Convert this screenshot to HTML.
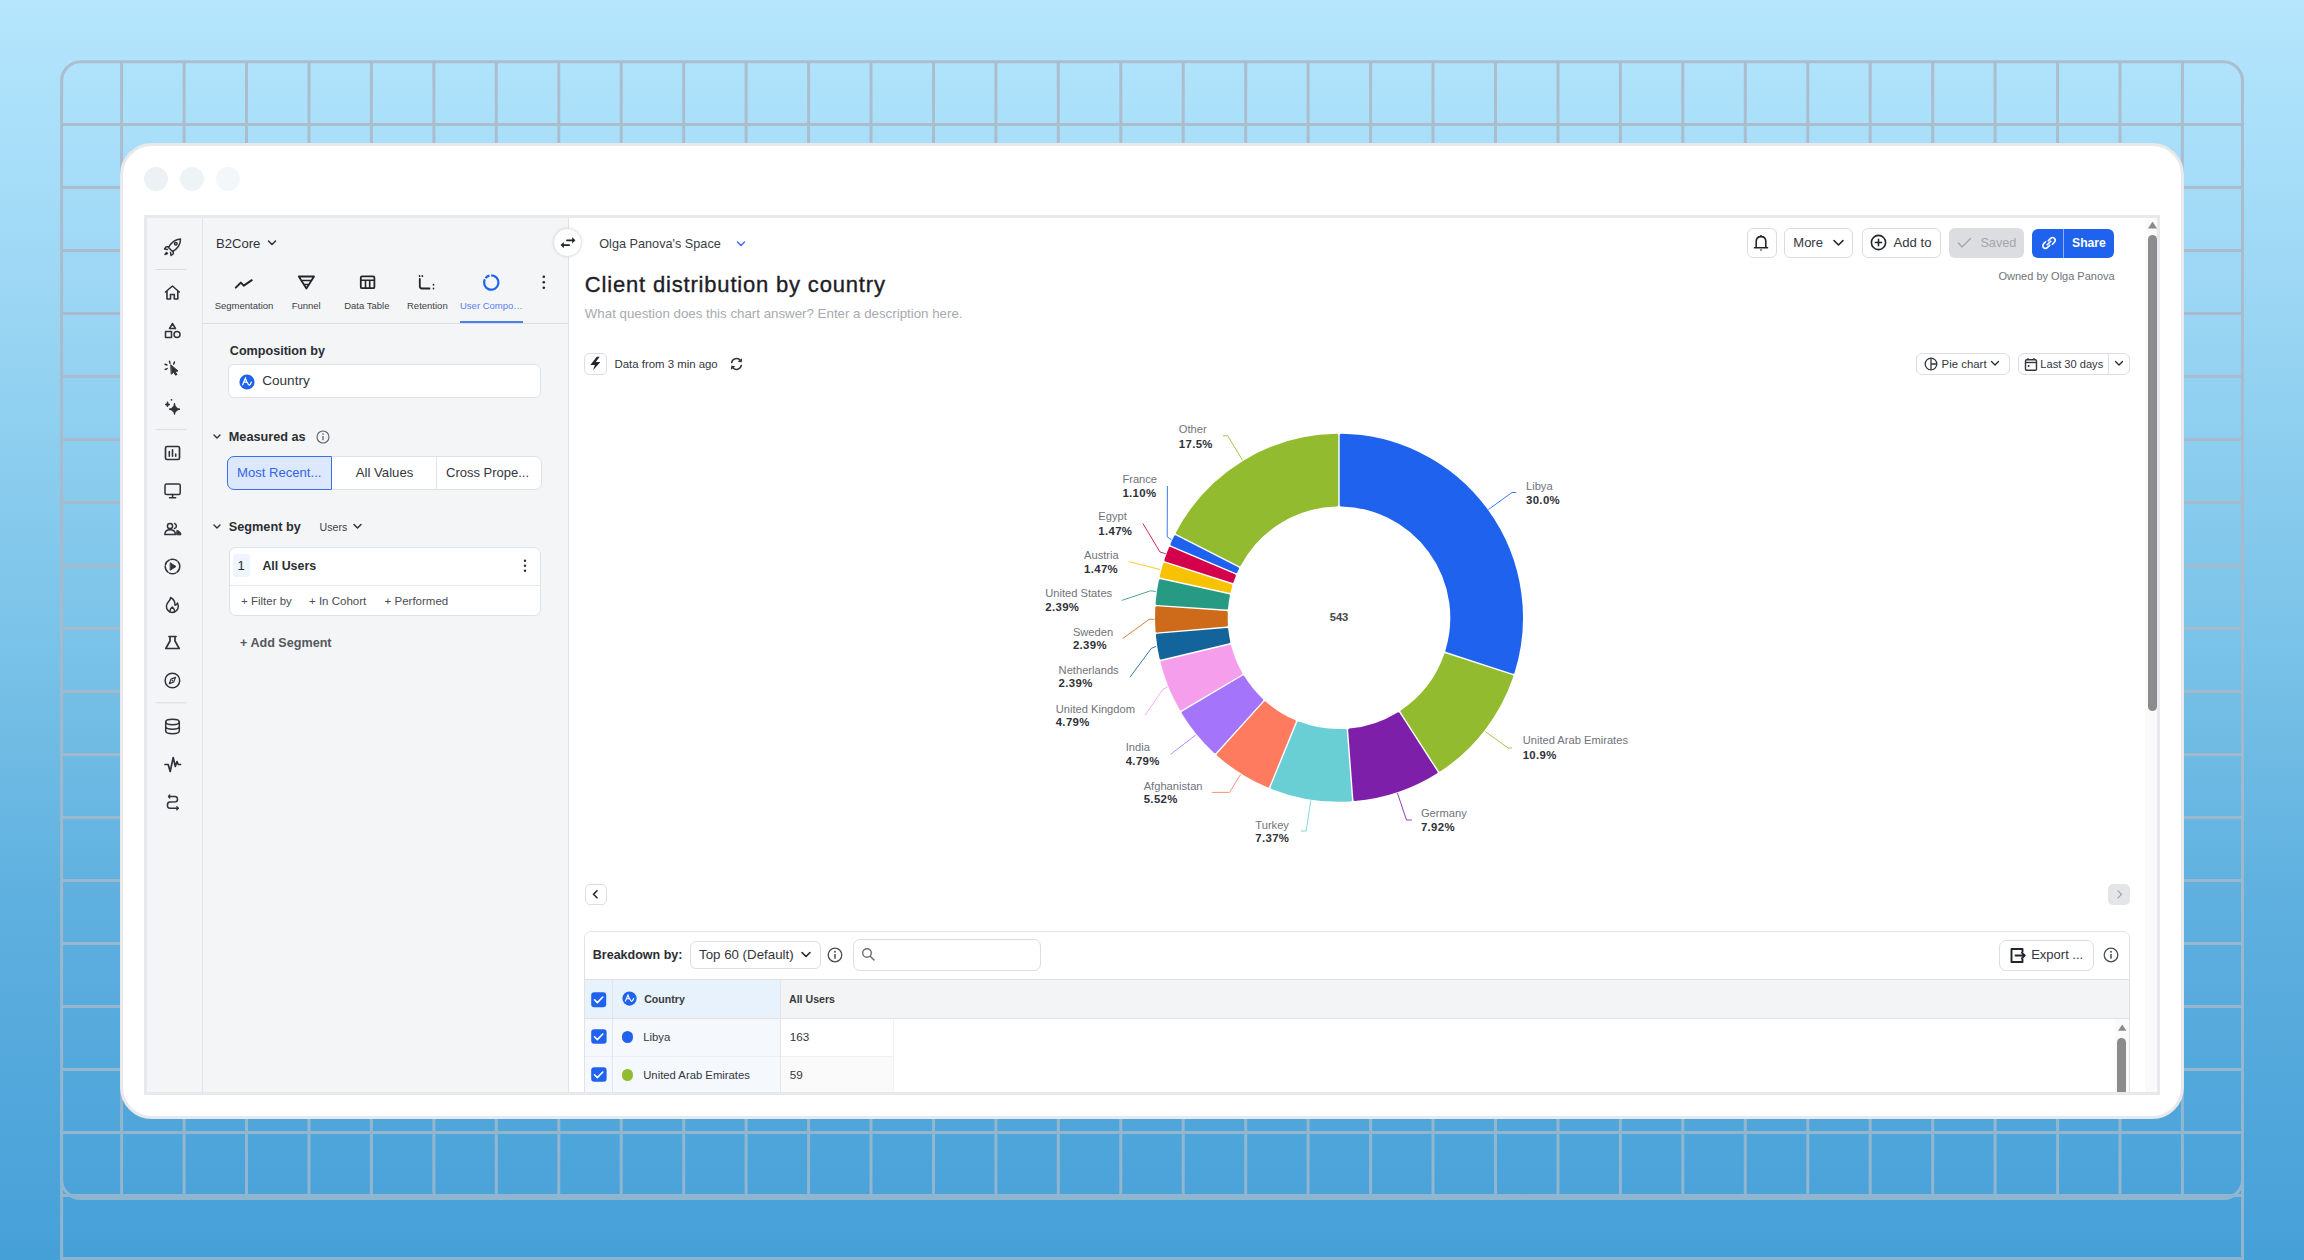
<!DOCTYPE html>
<html><head><meta charset="utf-8">
<style>
*{box-sizing:border-box;margin:0;padding:0}
html,body{width:2304px;height:1260px;overflow:hidden}
body{font-family:"Liberation Sans",sans-serif;color:#2d3036;
 background:linear-gradient(180deg,#b5e6fd 0%,#9bd6f4 23.8%,#7cc4e9 49.2%,#5fb0df 71.4%,#46a0d8 100%);position:relative}
.a{position:absolute}
.t{position:absolute;white-space:nowrap;line-height:20px;height:20px}
.ic{position:absolute;overflow:visible}
.btn{position:absolute;background:#fff;border:1px solid #d9dbdf;border-radius:6px}
</style></head><body>
<svg class="a" style="left:0;top:0" width="2304" height="1260" viewBox="0 0 2304 1260">
<defs><linearGradient id="gl" gradientUnits="userSpaceOnUse" x1="0" y1="0" x2="0" y2="1260"><stop offset="0" stop-color="#adbdcd"/><stop offset="0.49" stop-color="#a6bacb"/><stop offset="1" stop-color="#8eb5cf"/></linearGradient></defs>
<g stroke="url(#gl)" stroke-width="3" fill="none">
<rect x="61.6" y="61.8" width="2180.9" height="1136.6" rx="19" ry="19"/>
<line x1="121.6" y1="61.8" x2="121.6" y2="1198.4"/>
<line x1="184.1" y1="61.8" x2="184.1" y2="1198.4"/>
<line x1="246.5" y1="61.8" x2="246.5" y2="1198.4"/>
<line x1="309.0" y1="61.8" x2="309.0" y2="1198.4"/>
<line x1="371.4" y1="61.8" x2="371.4" y2="1198.4"/>
<line x1="433.9" y1="61.8" x2="433.9" y2="1198.4"/>
<line x1="496.3" y1="61.8" x2="496.3" y2="1198.4"/>
<line x1="558.8" y1="61.8" x2="558.8" y2="1198.4"/>
<line x1="621.2" y1="61.8" x2="621.2" y2="1198.4"/>
<line x1="683.7" y1="61.8" x2="683.7" y2="1198.4"/>
<line x1="746.1" y1="61.8" x2="746.1" y2="1198.4"/>
<line x1="808.6" y1="61.8" x2="808.6" y2="1198.4"/>
<line x1="871.0" y1="61.8" x2="871.0" y2="1198.4"/>
<line x1="933.5" y1="61.8" x2="933.5" y2="1198.4"/>
<line x1="995.9" y1="61.8" x2="995.9" y2="1198.4"/>
<line x1="1058.3" y1="61.8" x2="1058.3" y2="1198.4"/>
<line x1="1120.8" y1="61.8" x2="1120.8" y2="1198.4"/>
<line x1="1183.2" y1="61.8" x2="1183.2" y2="1198.4"/>
<line x1="1245.7" y1="61.8" x2="1245.7" y2="1198.4"/>
<line x1="1308.1" y1="61.8" x2="1308.1" y2="1198.4"/>
<line x1="1370.6" y1="61.8" x2="1370.6" y2="1198.4"/>
<line x1="1433.0" y1="61.8" x2="1433.0" y2="1198.4"/>
<line x1="1495.5" y1="61.8" x2="1495.5" y2="1198.4"/>
<line x1="1558.0" y1="61.8" x2="1558.0" y2="1198.4"/>
<line x1="1620.4" y1="61.8" x2="1620.4" y2="1198.4"/>
<line x1="1682.8" y1="61.8" x2="1682.8" y2="1198.4"/>
<line x1="1745.3" y1="61.8" x2="1745.3" y2="1198.4"/>
<line x1="1807.8" y1="61.8" x2="1807.8" y2="1198.4"/>
<line x1="1870.2" y1="61.8" x2="1870.2" y2="1198.4"/>
<line x1="1932.7" y1="61.8" x2="1932.7" y2="1198.4"/>
<line x1="1995.1" y1="61.8" x2="1995.1" y2="1198.4"/>
<line x1="2057.6" y1="61.8" x2="2057.6" y2="1198.4"/>
<line x1="2120.0" y1="61.8" x2="2120.0" y2="1198.4"/>
<line x1="2182.4" y1="61.8" x2="2182.4" y2="1198.4"/>
<line x1="61.6" y1="124.4" x2="2242.5" y2="124.4"/>
<line x1="61.6" y1="187.4" x2="2242.5" y2="187.4"/>
<line x1="61.6" y1="250.4" x2="2242.5" y2="250.4"/>
<line x1="61.6" y1="313.4" x2="2242.5" y2="313.4"/>
<line x1="61.6" y1="376.4" x2="2242.5" y2="376.4"/>
<line x1="61.6" y1="439.4" x2="2242.5" y2="439.4"/>
<line x1="61.6" y1="502.4" x2="2242.5" y2="502.4"/>
<line x1="61.6" y1="565.4" x2="2242.5" y2="565.4"/>
<line x1="61.6" y1="628.4" x2="2242.5" y2="628.4"/>
<line x1="61.6" y1="691.4" x2="2242.5" y2="691.4"/>
<line x1="61.6" y1="754.4" x2="2242.5" y2="754.4"/>
<line x1="61.6" y1="817.4" x2="2242.5" y2="817.4"/>
<line x1="61.6" y1="880.4" x2="2242.5" y2="880.4"/>
<line x1="61.6" y1="943.4" x2="2242.5" y2="943.4"/>
<line x1="61.6" y1="1006.4" x2="2242.5" y2="1006.4"/>
<line x1="61.6" y1="1069.4" x2="2242.5" y2="1069.4"/>
<line x1="61.6" y1="1132.4" x2="2242.5" y2="1132.4"/>
<line x1="61.6" y1="1100" x2="61.6" y2="1260"/>
<line x1="2242.5" y1="1100" x2="2242.5" y2="1260"/>
<line x1="61.6" y1="1195.5" x2="2242.5" y2="1195.5"/>
<line x1="61.6" y1="1258.5" x2="2242.5" y2="1258.5"/>
</g></svg>
<!-- browser window -->
<div class="a" style="left:120px;top:143px;width:2064px;height:976px;background:#fff;border:3px solid #e8e9ec;border-radius:32px"></div>
<div class="a" style="left:144px;top:167px;width:24px;height:24px;border-radius:50%;background:#ebf1f4"></div>
<div class="a" style="left:180px;top:167px;width:24px;height:24px;border-radius:50%;background:#eef4f6"></div>
<div class="a" style="left:216px;top:167px;width:24px;height:24px;border-radius:50%;background:#f4f7f9"></div>
<!-- inner frame -->
<div class="a" style="left:144px;top:215px;width:2016px;height:880px;border:3px solid #e8e9ec;background:#fff;overflow:hidden">
 <div class="a" style="left:0;top:0;width:421px;height:874px;background:#f4f5f7"></div>
 <div class="a" style="left:55px;top:0;width:1px;height:874px;background:#e3e4e8"></div>
 <div class="a" style="left:421px;top:0;width:1px;height:874px;background:#e0e1e5"></div>
</div>
<div class="a" style="left:0;top:0;width:2160px;height:1092px;overflow:hidden">
<svg class="a" style="left:147px;top:218px" width="55" height="600" viewBox="147 218 55 600">
<g fill="none" stroke="#30333a" stroke-width="1.5" stroke-linecap="round" stroke-linejoin="round">
 <!-- rocket -->
 <path d="M180.5,239 C175,239.5 171,243 168.5,247.5 L172.5,251.5 C177,249 180.5,245 180.5,239 Z"/>
 <circle cx="175.8" cy="243.8" r="1.3"/>
 <path d="M168.8,246.8 L166,246.8 L164.5,249 L167.5,249.5"/>
 <path d="M173.2,251.2 L173.2,254 L171,255.5 L170.5,252.5"/>
 <path d="M166.5,252.5 L165,254.5 L167.5,253.5 Z" fill="#30333a"/>
 <line x1="156" y1="269.5" x2="186" y2="269.5" stroke="#dcdde1" stroke-width="1"/>
 <!-- home -->
 <path d="M165.5,292 L172.4,286 L179.3,292 M167,290.8 L167,299 L170.5,299 L170.5,294.5 L174.3,294.5 L174.3,299 L177.8,299 L177.8,290.8" stroke-width="1.6"/>
 <!-- shapes -->
 <path d="M172.5,323.5 L175.5,328.5 L169.5,328.5 Z"/>
 <rect x="165.5" y="331.5" width="6" height="6"/>
 <circle cx="177" cy="334.5" r="3"/>
 <!-- click -->
 <path d="M171,365 L178,371 L175,371.5 L177,374.5 L175.5,375.2 L173.8,372.2 L171.5,374 Z" fill="#30333a" stroke-width="1"/>
 <path d="M169.5,361.2 L169.9,363.2 M165,364.2 L167,365 M165.2,369.5 L167.1,368.6 M174.5,362 L173.7,364"/>
 <!-- sparkle -->
 <path d="M174.5,403.5 Q175.2,408.5 180,409.2 Q175.2,410 174.5,414.5 Q173.8,410 169,409.2 Q173.8,408.5 174.5,403.5 Z" fill="#30333a" stroke-width="1"/>
 <path d="M167.5,402 Q167.8,404.2 170,404.5 Q167.8,404.8 167.5,407 Q167.2,404.8 165,404.5 Q167.2,404.2 167.5,402 Z" fill="#30333a" stroke-width="0.8"/>
 <circle cx="171.5" cy="399.8" r="0.9" fill="#30333a" stroke="none"/>
 <line x1="156" y1="429.6" x2="186" y2="429.6" stroke="#dcdde1" stroke-width="1"/>
 <!-- bar chart -->
 <rect x="165.5" y="446.5" width="14" height="13" rx="1.5" stroke-width="1.7"/>
 <path d="M169.3,451.5 L169.3,456.2 M172.5,449.8 L172.5,456.2 M175.7,454 L175.7,456.2" stroke-width="1.6"/>
 <!-- monitor -->
 <rect x="165" y="484" width="15.2" height="10.5" rx="1.5"/>
 <path d="M172.6,494.5 L172.6,497.5 M169.5,497.8 L175.7,497.8"/>
 <!-- users -->
 <circle cx="170" cy="526" r="2.6"/>
 <path d="M164.8,534.5 C165,531 167.5,529.8 170,529.8 C173,529.8 175.2,531 175.5,534.5 Z"/>
 <path d="M174.5,523.5 A2.6,2.6 0 0 1 174.5,528.5"/>
 <path d="M177.2,530.5 C179.5,531 180.8,532.5 181,534.8 L177,534.8 Z" fill="#30333a" stroke-width="1"/>
 <!-- play dashed -->
 <circle cx="172.5" cy="566.5" r="7.3" stroke-dasharray="6.5 1.6"/>
 <path d="M170.5,563 L176,566.5 L170.5,570 Z" fill="#30333a" stroke-width="1"/>
 <!-- fire -->
 <path d="M170.5,597.5 C170.8,600 168.5,601.5 167.2,603.5 C165.5,606.5 166.2,611.5 172.3,612.5 C178.3,611.5 179.3,606.5 177.5,603 C176.8,604.5 175.8,605 175,605.2 C175.2,601.5 173.5,599 170.5,597.5 Z"/>
 <path d="M170,612 C169.5,610 171,608.2 172.3,607 C173.6,608.2 175,610 174.5,612"/>
 <!-- flask -->
 <path d="M169,636.5 L176,636.5 M170,636.5 L170,641 L165.8,648.5 L179.2,648.5 L175,641 L175,636.5" stroke-width="1.7"/>
 <!-- compass -->
 <circle cx="172.4" cy="680.5" r="7.3"/>
 <path d="M175.5,677.4 L173.8,681.9 L169.3,683.6 L171,679.1 Z" fill="none" stroke-width="1.2"/>
 <circle cx="172.4" cy="680.5" r="0.8" fill="#30333a" stroke="none"/>
 <line x1="156" y1="702.8" x2="186" y2="702.8" stroke="#dcdde1" stroke-width="1"/>
 <!-- database -->
 <ellipse cx="172.5" cy="722" rx="6.8" ry="2.7"/>
 <path d="M165.7,722 L165.7,731 C165.7,734.6 179.3,734.6 179.3,731 L179.3,722 M165.7,726.5 C165.7,730 179.3,730 179.3,726.5"/>
 <!-- pulse -->
 <path d="M165,764.5 L168.2,764.5 L170.2,771.5 L173.2,757.5 L175.3,766.5 L177,761.5 L178.2,764.5 L180.5,764.5" stroke-width="1.7"/>
 <!-- route -->
 <path d="M169,796.5 L175,796.5 C178,796.5 178.5,801.5 175.5,801.8 L169.8,802 C166.5,802.2 166.8,808.3 169.8,808.3 L178,808.3"/>
 <path d="M169.8,795 L168.5,796.5 L169.8,798 M176.8,806.8 L178.3,808.3 L176.8,809.8" stroke-width="1.3"/>
 <line x1="0" y1="0" x2="0" y2="0"/>
</g>
</svg>

<div class="t" style="left:216px;top:233.5px;font-size:13.1px;color:#2f3237">B2Core</div>
<svg class="ic" style="left:266px;top:238px" width="12" height="10"><path d="M2.5,3 L6,6.5 L9.5,3" fill="none" stroke="#2f3237" stroke-width="1.5" stroke-linecap="round" stroke-linejoin="round"/></svg>
<!-- tabs icons -->
<svg class="a" style="left:203px;top:265px" width="366" height="30" viewBox="203 265 366 30">
<g fill="none" stroke="#22252a" stroke-width="2" stroke-linecap="round" stroke-linejoin="round">
 <path d="M235.8,287.6 L240.8,282.6 L243.8,285.6 L251.8,280.2"/>
 <path d="M298.8,276.5 L314,276.5 L306.4,288.5 Z" stroke-width="1.8"/>
 <path d="M302.2,280.6 L310.6,280.6 M304.6,284.5 L308.2,284.5" stroke-width="1.5"/>
 <rect x="360.8" y="276.4" width="13.6" height="11.8" rx="1.3" stroke-width="1.8"/>
 <path d="M361,280.2 L374.2,280.2 M365.5,280.2 L365.5,288 M369.7,280.2 L369.7,288" stroke-width="1.6"/>
 <path d="M419.8,279 L419.8,286.3 C419.8,287.8 420.5,288.5 422,288.5 L429.5,288.5" stroke-width="1.8"/>
 <path d="M419.5,275.8 L419.6,276.3 M422.3,275.8 L422.4,276.3 M433.5,284.6 L433.5,285 M433.5,288.3 L433.5,288.7" stroke-width="1.6"/>
 <path d="M491.2,275.3 A7.2,7.2 0 1 1 484.8,279.3" stroke="#1f62ee" stroke-width="2.2" stroke-linecap="butt"/>
 <path d="M489.5,275.6 A7.2,7.2 0 0 0 485.5,278.2" stroke="#1f62ee" stroke-width="2.2" stroke-linecap="butt"/>
 <circle cx="543.8" cy="276.8" r="1.3" fill="#22252a" stroke="none"/>
 <circle cx="543.8" cy="282.3" r="1.3" fill="#22252a" stroke="none"/>
 <circle cx="543.8" cy="287.8" r="1.3" fill="#22252a" stroke="none"/>
</g></svg>
<div class="t" style="left:214.7px;top:295.5px;font-size:9.5px;color:#3c3f45">Segmentation</div>
<div class="t" style="left:291.7px;top:295.5px;font-size:9.5px;color:#3c3f45">Funnel</div>
<div class="t" style="left:344.2px;top:295.5px;font-size:9.5px;color:#3c3f45">Data Table</div>
<div class="t" style="left:407px;top:295.5px;font-size:9.5px;color:#3c3f45">Retention</div>
<div class="t" style="left:460px;top:295.5px;font-size:9.5px;color:#5b7ef0">User Compo…</div>
<div class="a" style="left:460px;top:321px;width:63px;height:2px;background:#4f7df0"></div>
<div class="a" style="left:203px;top:323px;width:365px;height:1px;background:#dcdee2"></div>
<!-- composition -->
<div class="t" style="left:229.8px;top:340.8px;font-size:12.6px;font-weight:700;color:#2b2e33">Composition by</div>
<div class="a" style="left:228.4px;top:363.7px;width:312.6px;height:34.5px;background:#fff;border:1px solid #dfe1e5;border-radius:6px"></div>
<svg class="ic" style="left:239px;top:373.5px" width="16" height="16" viewBox="0 0 16 16"><circle cx="8" cy="8" r="7.6" fill="#1f62ee"/><path d="M3.6,10.8 L6.4,4.2 L8,8.5 M5,8.2 L7.5,8.2 M8.3,8.3 C9.5,12 11,12 12.4,8" fill="none" stroke="#fff" stroke-width="1.2" stroke-linecap="round"/></svg>
<div class="t" style="left:262.2px;top:371.3px;font-size:13.6px;color:#33363c">Country</div>
<!-- measured as -->
<svg class="ic" style="left:212px;top:432px" width="10" height="10"><path d="M2,3 L5,6 L8,3" fill="none" stroke="#2f3237" stroke-width="1.4" stroke-linecap="round" stroke-linejoin="round"/></svg>
<div class="t" style="left:228.8px;top:427px;font-size:12.7px;font-weight:700;color:#2b2e33">Measured as</div>
<svg class="ic" style="left:315.8px;top:430px" width="14" height="14" viewBox="0 0 14 14"><circle cx="7" cy="7" r="6" fill="none" stroke="#5f636a" stroke-width="1.1"/><path d="M7,6 L7,10.2" stroke="#5f636a" stroke-width="1.3"/><circle cx="7" cy="4.1" r="0.8" fill="#5f636a"/></svg>
<div class="a" style="left:227.3px;top:455.5px;width:315.2px;height:34.1px;background:#fff;border:1px solid #dfe1e5;border-radius:7px"></div>
<div class="a" style="left:227.3px;top:455.5px;width:105px;height:34.1px;background:#dce8fd;border:1.5px solid #3b6ff0;border-radius:7px 0 0 7px"></div>
<div class="a" style="left:436.3px;top:456px;width:1px;height:33px;background:#e3e5e8"></div>
<div class="t" style="left:237px;top:462.5px;font-size:13.1px;color:#3565e6">Most Recent...</div>
<div class="t" style="left:355.7px;top:462.5px;font-size:13.2px;color:#33363c">All Values</div>
<div class="t" style="left:446px;top:462.5px;font-size:13px;color:#33363c">Cross Prope...</div>
<!-- segment by -->
<svg class="ic" style="left:212px;top:522.3px" width="10" height="10"><path d="M2,3 L5,6 L8,3" fill="none" stroke="#2f3237" stroke-width="1.4" stroke-linecap="round" stroke-linejoin="round"/></svg>
<div class="t" style="left:228.8px;top:517.3px;font-size:12.7px;font-weight:700;color:#2b2e33">Segment by</div>
<div class="t" style="left:319.6px;top:517.3px;font-size:10.6px;color:#3c3f45">Users</div>
<svg class="ic" style="left:352px;top:522px" width="12" height="10"><path d="M2,2.5 L5.5,6 L9,2.5" fill="none" stroke="#2f3237" stroke-width="1.5" stroke-linecap="round" stroke-linejoin="round"/></svg>
<div class="a" style="left:228.7px;top:546.5px;width:312.3px;height:69.5px;background:#fff;border:1px solid #dfe1e5;border-radius:7px"></div>
<div class="a" style="left:229.5px;top:584.5px;width:311px;height:1px;background:#e6e8eb"></div>
<div class="a" style="left:233px;top:554px;width:17px;height:23px;background:#eef5fd;border-radius:3px"></div>
<div class="t" style="left:237.5px;top:556px;font-size:13px;color:#2b2e33">1</div>
<div class="t" style="left:262.4px;top:556px;font-size:12.4px;font-weight:700;color:#2b2e33">All Users</div>
<svg class="ic" style="left:522px;top:559px" width="6" height="14"><circle cx="3" cy="1.8" r="1.2" fill="#2b2e33"/><circle cx="3" cy="6.8" r="1.2" fill="#2b2e33"/><circle cx="3" cy="11.8" r="1.2" fill="#2b2e33"/></svg>
<div class="t" style="left:241px;top:590.6px;font-size:11.5px;color:#4a4d53">+ Filter by</div>
<div class="t" style="left:309px;top:590.6px;font-size:11.5px;color:#4a4d53">+ In Cohort</div>
<div class="t" style="left:384.6px;top:590.6px;font-size:11.5px;color:#4a4d53">+ Performed</div>
<div class="t" style="left:240px;top:633px;font-size:12.6px;font-weight:700;color:#54575d">+ Add Segment</div>
<!-- swap circle -->
<div class="a" style="left:553px;top:228.2px;width:28.8px;height:28.8px;border-radius:50%;background:#fff;border:1px solid #e2e4e8;box-shadow:0 0 3px rgba(0,0,0,0.10)"></div>
<svg class="ic" style="left:559px;top:235px" width="18" height="14" viewBox="559 235 18 14"><path d="M567,240.3 L572.8,240.3 M569.1,245.1 L563.3,245.1" stroke="#22252a" stroke-width="1.8" stroke-linecap="round"/><path d="M572.2,237.2 L575.4,240.3 L572.2,243.4 Z M563.8,242 L560.6,245.1 L563.8,248.2 Z" fill="#22252a"/></svg>

<div class="t" style="left:599.2px;top:234.4px;font-size:12.7px;color:#3a3d43">Olga Panova's Space</div>
<svg class="ic" style="left:735px;top:239px" width="12" height="10"><path d="M2.5,3 L6,6.5 L9.5,3" fill="none" stroke="#3b6ff0" stroke-width="1.5" stroke-linecap="round" stroke-linejoin="round"/></svg>
<!-- buttons -->
<div class="btn" style="left:1746.6px;top:228.2px;width:30px;height:29.6px;border-color:#dadce0"></div>
<svg class="ic" style="left:1753px;top:234px" width="16" height="18" viewBox="0 0 16 18"><path d="M3.2,13.5 L3.2,7.5 C3.2,4.5 5.2,2.6 8,2.6 C10.8,2.6 12.8,4.5 12.8,7.5 L12.8,13.5 M1.5,13.8 L14.5,13.8" fill="none" stroke="#22252a" stroke-width="1.6" stroke-linecap="round"/><path d="M6.6,15.6 L9.4,15.6 L8,17 Z" fill="#22252a"/><circle cx="8" cy="2" r="1" fill="#22252a"/></svg>
<div class="btn" style="left:1784.2px;top:228.2px;width:69.3px;height:29.6px;border-color:#dadce0"></div>
<div class="t" style="left:1793.3px;top:233px;font-size:13px;color:#33363c">More</div>
<svg class="ic" style="left:1832px;top:238px" width="13" height="10"><path d="M2,2.5 L6.5,7 L11,2.5" fill="none" stroke="#22252a" stroke-width="1.6" stroke-linecap="round" stroke-linejoin="round"/></svg>
<div class="btn" style="left:1862.2px;top:228.2px;width:78.8px;height:29.6px;border-color:#dadce0"></div>
<svg class="ic" style="left:1869.5px;top:234.2px" width="17" height="17" viewBox="0 0 17 17"><circle cx="8.5" cy="8.5" r="7.1" fill="none" stroke="#22252a" stroke-width="1.6"/><path d="M8.5,4.8 L8.5,12.2 M4.8,8.5 L12.2,8.5" stroke="#22252a" stroke-width="1.6"/></svg>
<div class="t" style="left:1893.6px;top:233px;font-size:13.1px;color:#33363c">Add to</div>
<div class="a" style="left:1948.9px;top:227.9px;width:75.1px;height:30.2px;background:#dcdde1;border-radius:6px"></div>
<svg class="ic" style="left:1956.5px;top:237px" width="15" height="12" viewBox="0 0 15 12"><path d="M1.5,6 L5,10 L13.5,1.5" fill="none" stroke="#a3a6ad" stroke-width="1.4" stroke-linecap="round" stroke-linejoin="round"/></svg>
<div class="t" style="left:1980.4px;top:233px;font-size:12.7px;color:#a3a6ad">Saved</div>
<div class="a" style="left:2032.4px;top:229px;width:81.6px;height:28.5px;background:#1f62ee;border-radius:6px"></div>
<div class="a" style="left:2063px;top:229px;width:1.2px;height:28.5px;background:#8fb0f8"></div>
<svg class="ic" style="left:2040.5px;top:235px" width="16" height="16" viewBox="0 0 16 16"><path d="M7.2,5.8 L9.4,3.6 C10.6,2.4 12.4,2.4 13.4,3.4 C14.4,4.4 14.4,6.2 13.2,7.4 L11.4,9.2 M8.8,10.2 L6.6,12.4 C5.4,13.6 3.6,13.6 2.6,12.6 C1.6,11.6 1.6,9.8 2.8,8.6 L4.6,6.8 M6.2,9.8 L9.8,6.2" fill="none" stroke="#fff" stroke-width="1.6" stroke-linecap="round"/></svg>
<div class="t" style="left:2072px;top:233px;font-size:12.2px;font-weight:700;color:#fff">Share</div>
<div class="t" style="left:1998.5px;top:266.3px;font-size:11px;color:#6f737a">Owned by Olga Panova</div>
<!-- title -->
<div class="t" style="left:584.8px;top:272px;font-size:22px;letter-spacing:0.82px;color:#1d2026;-webkit-text-stroke:0.35px #1d2026;height:26px;line-height:26px">Client distribution by country</div>
<div class="t" style="left:584.8px;top:303.8px;font-size:13.3px;color:#a6aab1">What question does this chart answer? Enter a description here.</div>
<!-- data from -->
<div class="btn" style="left:584.4px;top:353.2px;width:22.2px;height:21.6px;border-color:#dcdee2;border-radius:5px"></div>
<svg class="ic" style="left:585px;top:354px" width="21" height="20" viewBox="585 354 21 20"><path d="M596.8,356.8 L590.3,364.9 L594.9,364.9 L593,370.3 L600.4,362.1 L595.8,362.1 L599.6,356.8 Z" fill="#22252a"/></svg>
<div class="t" style="left:614.5px;top:354px;font-size:11.4px;color:#33363c">Data from 3 min ago</div>
<svg class="ic" style="left:728px;top:356px" width="17" height="17" viewBox="728 356 17 17"><path d="M731.6,363.2 A5,5 0 0 1 740.6,360.6 M741.4,364.8 A5,5 0 0 1 732.4,367.4" fill="none" stroke="#33363c" stroke-width="1.5"/><path d="M742.2,358.2 L741.6,362.6 L737.6,361.4 Z M730.8,369.8 L731.4,365.4 L735.4,366.6 Z" fill="#33363c"/></svg>
<!-- pie chart / last 30 -->
<div class="btn" style="left:1916.1px;top:353.1px;width:94.2px;height:21.6px;border-color:#dcdee2;border-radius:6px"></div>
<svg class="ic" style="left:1923.5px;top:357px" width="14" height="14" viewBox="0 0 14 14"><circle cx="7" cy="7" r="5.8" fill="none" stroke="#33363c" stroke-width="1.3"/><path d="M7,1.2 L7,12.8 M7,7 L12.8,7" stroke="#33363c" stroke-width="1.3"/></svg>
<div class="t" style="left:1941.6px;top:354px;font-size:11.4px;color:#33363c">Pie chart</div>
<svg class="ic" style="left:1990px;top:360px" width="10" height="8"><path d="M1.5,1.5 L5,5 L8.5,1.5" fill="none" stroke="#22252a" stroke-width="1.3" stroke-linecap="round" stroke-linejoin="round"/></svg>
<div class="btn" style="left:2018.2px;top:353.1px;width:111.8px;height:21.6px;border-color:#dcdee2;border-radius:6px"></div>
<div class="a" style="left:2107.5px;top:354px;width:1px;height:20px;background:#dcdee2"></div>
<svg class="ic" style="left:2024px;top:356.5px" width="14" height="15" viewBox="0 0 14 15"><rect x="1.5" y="2.8" width="11" height="10.5" rx="1.2" fill="none" stroke="#33363c" stroke-width="1.4"/><path d="M1.5,5.5 L12.5,5.5" stroke="#33363c" stroke-width="1.4"/><path d="M4,1 L4,3 M10,1 L10,3" stroke="#33363c" stroke-width="1.3"/><circle cx="4.6" cy="9" r="1" fill="#33363c"/></svg>
<div class="t" style="left:2040.3px;top:354px;font-size:11.1px;color:#33363c">Last 30 days</div>
<svg class="ic" style="left:2114px;top:360px" width="10" height="8"><path d="M1.5,1.5 L5,5 L8.5,1.5" fill="none" stroke="#22252a" stroke-width="1.3" stroke-linecap="round" stroke-linejoin="round"/></svg>
<!-- scrollbar -->
<div class="a" style="left:2144.8px;top:218px;width:12.2px;height:874px;background:#fafafa"></div>
<svg class="ic" style="left:2147px;top:220px" width="11" height="10"><path d="M1,8.6 L5.5,1.4 L10,8.6 Z" fill="#8b8b8b"/></svg>
<div class="a" style="left:2148px;top:234.9px;width:9px;height:475.8px;background:#8b8b8b;border-radius:4.5px"></div>

<svg class="a" style="left:0;top:0" width="2304" height="1260" viewBox="0 0 2304 1260">
<path d="M1341.10,435.21 A182.6,182.6 0 0 1 1513.24,672.43 L1446.78,650.75 A112.7,112.7 0 0 0 1341.10,505.12 Z" fill="#1f62ee" stroke="#1f62ee" stroke-width="2.8" stroke-linejoin="round"/>
<path d="M1511.93,676.42 A182.6,182.6 0 0 1 1439.72,770.11 L1401.83,711.36 A112.7,112.7 0 0 0 1445.47,654.74 Z" fill="#93bb2f" stroke="#93bb2f" stroke-width="2.8" stroke-linejoin="round"/>
<path d="M1436.19,772.38 A182.6,182.6 0 0 1 1354.81,799.71 L1349.56,730.00 A112.7,112.7 0 0 0 1398.30,713.63 Z" fill="#7e1fa9" stroke="#7e1fa9" stroke-width="2.8" stroke-linejoin="round"/>
<path d="M1350.63,800.03 A182.6,182.6 0 0 1 1271.93,787.63 L1298.35,722.91 A112.7,112.7 0 0 0 1345.37,730.32 Z" fill="#6acfd4" stroke="#6acfd4" stroke-width="2.8" stroke-linejoin="round"/>
<path d="M1268.04,786.05 A182.6,182.6 0 0 1 1218.15,754.68 L1265.02,702.81 A112.7,112.7 0 0 0 1294.46,721.33 Z" fill="#ff7b5f" stroke="#ff7b5f" stroke-width="2.8" stroke-linejoin="round"/>
<path d="M1215.03,751.87 A182.6,182.6 0 0 1 1183.01,712.72 L1243.15,677.07 A112.7,112.7 0 0 0 1261.90,700.00 Z" fill="#a474fb" stroke="#a474fb" stroke-width="2.8" stroke-linejoin="round"/>
<path d="M1180.87,709.11 A182.6,182.6 0 0 1 1161.89,662.24 L1229.89,646.00 A112.7,112.7 0 0 0 1241.00,673.46 Z" fill="#f59fec" stroke="#f59fec" stroke-width="2.8" stroke-linejoin="round"/>
<path d="M1160.91,658.15 A182.6,182.6 0 0 1 1157.23,635.19 L1226.89,629.33 A112.7,112.7 0 0 0 1228.91,641.92 Z" fill="#12649b" stroke="#12649b" stroke-width="2.8" stroke-linejoin="round"/>
<path d="M1156.88,631.01 A182.6,182.6 0 0 1 1156.68,607.76 L1226.43,612.40 A112.7,112.7 0 0 0 1226.54,625.15 Z" fill="#cd6b1b" stroke="#cd6b1b" stroke-width="2.8" stroke-linejoin="round"/>
<path d="M1156.96,603.57 A182.6,182.6 0 0 1 1160.24,580.55 L1228.51,595.59 A112.7,112.7 0 0 0 1226.71,608.21 Z" fill="#269a83" stroke="#269a83" stroke-width="2.8" stroke-linejoin="round"/>
<path d="M1161.14,576.44 A182.6,182.6 0 0 1 1164.45,564.18 L1231.03,585.48 A112.7,112.7 0 0 0 1229.41,591.49 Z" fill="#f9c200" stroke="#f9c200" stroke-width="2.8" stroke-linejoin="round"/>
<path d="M1165.73,560.18 A182.6,182.6 0 0 1 1170.15,548.28 L1234.49,575.63 A112.7,112.7 0 0 0 1232.31,581.48 Z" fill="#d4004b" stroke="#d4004b" stroke-width="2.8" stroke-linejoin="round"/>
<path d="M1171.80,544.41 A182.6,182.6 0 0 1 1175.38,536.73 L1237.66,568.49 A112.7,112.7 0 0 0 1236.13,571.77 Z" fill="#1f62ee" stroke="#1f62ee" stroke-width="2.8" stroke-linejoin="round"/>
<path d="M1177.29,532.99 A182.6,182.6 0 0 1 1336.90,435.21 L1336.90,505.12 A112.7,112.7 0 0 0 1239.57,564.74 Z" fill="#93bb2f" stroke="#93bb2f" stroke-width="2.8" stroke-linejoin="round"/>
<polyline points="1222.9,435.8 1227.7,435.8 1242.5,460.2" fill="none" stroke="#93bb2f" stroke-width="1" stroke-opacity="0.85"/>
<text x="1178.8" y="432.9" font-size="11.15" fill="#6f737b">Other</text>
<text x="1178.8" y="447.7" font-size="11.4" font-weight="700" letter-spacing="0.35" fill="#2f3238">17.5%</text>
<polyline points="1167.4,486.0 1167.2,536.8 1171.5,539.8" fill="none" stroke="#1f62ee" stroke-width="1" stroke-opacity="0.85"/>
<text x="1122.4" y="482.9" font-size="11.15" fill="#6f737b">France</text>
<text x="1122.4" y="496.8" font-size="11.4" font-weight="700" letter-spacing="0.35" fill="#2f3238">1.10%</text>
<polyline points="1142.9,523.5 1160.0,552.0 1165.7,553.7" fill="none" stroke="#d4004b" stroke-width="1" stroke-opacity="0.85"/>
<text x="1098.3" y="519.7" font-size="11.15" fill="#6f737b">Egypt</text>
<text x="1098.3" y="534.9" font-size="11.4" font-weight="700" letter-spacing="0.35" fill="#2f3238">1.47%</text>
<polyline points="1128.9,561.6 1160.0,569.5" fill="none" stroke="#f9c200" stroke-width="1" stroke-opacity="0.85"/>
<text x="1084" y="558.8" font-size="11.15" fill="#6f737b">Austria</text>
<text x="1084" y="572.8" font-size="11.4" font-weight="700" letter-spacing="0.35" fill="#2f3238">1.47%</text>
<polyline points="1121.9,600.4 1150.5,590.8 1155.8,591.5" fill="none" stroke="#269a83" stroke-width="1" stroke-opacity="0.85"/>
<text x="1045.3" y="596.9" font-size="11.15" fill="#6f737b">United States</text>
<text x="1045.3" y="610.5" font-size="11.4" font-weight="700" letter-spacing="0.35" fill="#2f3238">2.39%</text>
<polyline points="1122.6,638.6 1149.3,619.3 1154.3,619.3" fill="none" stroke="#cd6b1b" stroke-width="1" stroke-opacity="0.85"/>
<text x="1072.9" y="635.7" font-size="11.15" fill="#6f737b">Sweden</text>
<text x="1072.9" y="649.3" font-size="11.4" font-weight="700" letter-spacing="0.35" fill="#2f3238">2.39%</text>
<polyline points="1130.0,677.1 1151.4,648.3 1156.0,646.4" fill="none" stroke="#12649b" stroke-width="1" stroke-opacity="0.85"/>
<text x="1058.6" y="673.6" font-size="11.15" fill="#6f737b">Netherlands</text>
<text x="1058.6" y="687.1" font-size="11.4" font-weight="700" letter-spacing="0.35" fill="#2f3238">2.39%</text>
<polyline points="1145.0,715.4 1162.9,689.3 1167.9,686.9" fill="none" stroke="#f59fec" stroke-width="1" stroke-opacity="0.85"/>
<text x="1055.7" y="712.9" font-size="11.15" fill="#6f737b">United Kingdom</text>
<text x="1055.7" y="726.4" font-size="11.4" font-weight="700" letter-spacing="0.35" fill="#2f3238">4.79%</text>
<polyline points="1170.7,754.3 1195.7,735.0" fill="none" stroke="#a474fb" stroke-width="1" stroke-opacity="0.85"/>
<text x="1125.7" y="751.4" font-size="11.15" fill="#6f737b">India</text>
<text x="1125.7" y="765" font-size="11.4" font-weight="700" letter-spacing="0.35" fill="#2f3238">4.79%</text>
<polyline points="1212.0,792.4 1229.5,792.4 1240.6,774.4" fill="none" stroke="#ff7b5f" stroke-width="1" stroke-opacity="0.85"/>
<text x="1143.7" y="789.6" font-size="11.15" fill="#6f737b">Afghanistan</text>
<text x="1143.7" y="803.3" font-size="11.4" font-weight="700" letter-spacing="0.35" fill="#2f3238">5.52%</text>
<polyline points="1300.9,831.0 1306.2,831.0 1310.8,800.3" fill="none" stroke="#6acfd4" stroke-width="1" stroke-opacity="0.85"/>
<text x="1255.3" y="828.8" font-size="11.15" fill="#6f737b">Turkey</text>
<text x="1255.3" y="842" font-size="11.4" font-weight="700" letter-spacing="0.35" fill="#2f3238">7.37%</text>
<polyline points="1411.8,820.0 1406.5,820.0 1397.4,793.0" fill="none" stroke="#7e1fa9" stroke-width="1" stroke-opacity="0.85"/>
<text x="1420.9" y="817" font-size="11.15" fill="#6f737b">Germany</text>
<text x="1420.9" y="830.6" font-size="11.4" font-weight="700" letter-spacing="0.35" fill="#2f3238">7.92%</text>
<polyline points="1512.0,748.0 1508.2,748.0 1485.4,731.6" fill="none" stroke="#93bb2f" stroke-width="1" stroke-opacity="0.85"/>
<text x="1522.7" y="744.3" font-size="11.15" fill="#6f737b">United Arab Emirates</text>
<text x="1522.7" y="759" font-size="11.4" font-weight="700" letter-spacing="0.35" fill="#2f3238">10.9%</text>
<polyline points="1516.3,492.5 1512.0,492.5 1488.4,509.5" fill="none" stroke="#1f62ee" stroke-width="1" stroke-opacity="0.85"/>
<text x="1526" y="490" font-size="11.15" fill="#6f737b">Libya</text>
<text x="1526" y="504.4" font-size="11.4" font-weight="700" letter-spacing="0.35" fill="#2f3238">30.0%</text>
<text x="1339" y="621.3" font-size="11.2" font-weight="700" fill="#45474c" text-anchor="middle">543</text>
</svg>
<!-- carousel arrows -->
<div class="btn" style="left:584.5px;top:884.1px;width:22px;height:20.6px;border-color:#dcdee2;border-radius:5px"></div>
<svg class="ic" style="left:591px;top:889px" width="9" height="11"><path d="M6,1.8 L2.5,5.3 L6,8.8" fill="none" stroke="#22252a" stroke-width="1.6" stroke-linecap="round" stroke-linejoin="round"/></svg>
<div class="a" style="left:2107.5px;top:883.7px;width:22.7px;height:21.3px;background:#e3e5e8;border-radius:5px"></div>
<svg class="ic" style="left:2114.5px;top:889px" width="9" height="11"><path d="M3,1.8 L6.5,5.3 L3,8.8" fill="none" stroke="#9a9da3" stroke-width="1.1" stroke-linecap="round" stroke-linejoin="round"/></svg>
<!-- table card -->
<div class="a" style="left:584.2px;top:931px;width:1545.6px;height:200px;border:1px solid #e0e2e5;border-radius:7px;background:#fff;overflow:hidden">
 <div class="a" style="left:0;top:47.4px;width:1544px;height:39.6px;background:#f3f4f6;border-top:1px solid #dfe1e4;border-bottom:1px solid #dfe1e4"></div>
 <div class="a" style="left:0;top:48.4px;width:194.8px;height:37.6px;background:#e8f2fd"></div>
 <div class="a" style="left:0;top:87px;width:194.8px;height:76px;background:#f5f9fe"></div>
 <div class="a" style="left:194.8px;top:87px;width:113.2px;height:37.3px;background:#fff"></div>
 <div class="a" style="left:194.8px;top:124.3px;width:113.2px;height:38px;background:#fafafa"></div>
 <div class="a" style="left:0;top:124.3px;width:308px;height:1px;background:#eef0f2"></div>
 <div class="a" style="left:308px;top:87px;width:1px;height:76px;background:#f0f1f3"></div>
 <div class="a" style="left:27.2px;top:48.4px;width:1px;height:114px;background:#e3e5e8"></div>
 <div class="a" style="left:194.8px;top:48.4px;width:1px;height:114px;background:#e3e5e8"></div>
 <div class="a" style="left:1529.5px;top:86.8px;width:16px;height:76px;background:#fafafa"></div>
</div>
<div class="t" style="left:592.8px;top:945px;font-size:12.5px;font-weight:700;color:#2b2e33">Breakdown by:</div>
<div class="btn" style="left:690.4px;top:940.5px;width:130.7px;height:28.9px;border-color:#dcdee2;border-radius:6px"></div>
<div class="t" style="left:699px;top:945.2px;font-size:13.3px;color:#33363c">Top 60 (Default)</div>
<svg class="ic" style="left:800px;top:950px" width="12" height="10"><path d="M2,2.5 L6,6.5 L10,2.5" fill="none" stroke="#22252a" stroke-width="1.6" stroke-linecap="round" stroke-linejoin="round"/></svg>
<svg class="ic" style="left:827.2px;top:947px" width="16" height="16" viewBox="0 0 16 16"><circle cx="8" cy="8" r="6.8" fill="none" stroke="#4a4d53" stroke-width="1.3"/><path d="M8,7 L8,11.8" stroke="#4a4d53" stroke-width="1.5"/><circle cx="8" cy="4.7" r="0.95" fill="#4a4d53"/></svg>
<div class="btn" style="left:852.5px;top:939.4px;width:188.4px;height:31.9px;border-color:#dcdee2;border-radius:7px"></div>
<svg class="ic" style="left:861px;top:947px" width="15" height="15" viewBox="0 0 15 15"><circle cx="6" cy="6" r="4.3" fill="none" stroke="#6a6d73" stroke-width="1.4"/><path d="M9.2,9.2 L13,13" stroke="#6a6d73" stroke-width="1.5" stroke-linecap="round"/></svg>
<div class="btn" style="left:1999.2px;top:940px;width:95.3px;height:31px;border-color:#dcdee2;border-radius:7px"></div>
<svg class="ic" style="left:2009px;top:946.5px" width="18" height="17" viewBox="0 0 18 17"><path d="M13.5,5.2 L13.5,2 L2.5,2 L2.5,15 L13.5,15 L13.5,11.8" fill="none" stroke="#22252a" stroke-width="1.9" stroke-linejoin="round"/><path d="M6.5,8.5 L15.8,8.5 M12.8,5.6 L15.8,8.5 L12.8,11.4" fill="none" stroke="#22252a" stroke-width="1.8" stroke-linecap="round" stroke-linejoin="round"/></svg>
<div class="t" style="left:2031.2px;top:945px;font-size:13px;color:#33363c">Export ...</div>
<svg class="ic" style="left:2103.3px;top:947px" width="16" height="16" viewBox="0 0 16 16"><circle cx="8" cy="8" r="6.8" fill="none" stroke="#4a4d53" stroke-width="1.3"/><path d="M8,7 L8,11.8" stroke="#4a4d53" stroke-width="1.5"/><circle cx="8" cy="4.7" r="0.95" fill="#4a4d53"/></svg>
<!-- header row -->
<svg class="ic" style="left:591px;top:991.5px" width="16" height="16" viewBox="0 0 16 16"><rect x="0.2" y="0.2" width="15" height="15" rx="3" fill="#1f62ee"/><path d="M3.5,7.8 L6.3,10.6 L11.8,5" fill="none" stroke="#fff" stroke-width="1.6" stroke-linecap="round" stroke-linejoin="round"/></svg>
<svg class="ic" style="left:622.2px;top:991.4px" width="15" height="15" viewBox="0 0 16 16"><circle cx="8" cy="8" r="7.6" fill="#1f62ee"/><path d="M3.6,10.8 L6.4,4.2 L8,8.5 M5,8.2 L7.5,8.2 M8.3,8.3 C9.5,12 11,12 12.4,8" fill="none" stroke="#fff" stroke-width="1.2" stroke-linecap="round"/></svg>
<div class="t" style="left:644.2px;top:988.9px;font-size:10.6px;font-weight:700;color:#383b40">Country</div>
<div class="t" style="left:789px;top:988.9px;font-size:10.6px;font-weight:700;color:#383b40">All Users</div>
<!-- rows -->
<svg class="ic" style="left:591px;top:1029.4px" width="16" height="16" viewBox="0 0 16 16"><rect x="0.2" y="0.2" width="15.4" height="14.6" rx="3" fill="#1f62ee"/><path d="M3.5,7.8 L6.3,10.6 L11.8,5" fill="none" stroke="#fff" stroke-width="1.6" stroke-linecap="round" stroke-linejoin="round"/></svg>
<div class="a" style="left:621.7px;top:1031.3px;width:11.6px;height:11.6px;border-radius:50%;background:#1f62ee"></div>
<div class="t" style="left:643.2px;top:1027.1px;font-size:11.3px;color:#33363c">Libya</div>
<div class="t" style="left:789.7px;top:1027.1px;font-size:11.7px;color:#33363c">163</div>
<svg class="ic" style="left:591px;top:1067.4px" width="16" height="16" viewBox="0 0 16 16"><rect x="0.2" y="0.2" width="15.4" height="14.6" rx="3" fill="#1f62ee"/><path d="M3.5,7.8 L6.3,10.6 L11.8,5" fill="none" stroke="#fff" stroke-width="1.6" stroke-linecap="round" stroke-linejoin="round"/></svg>
<div class="a" style="left:621.7px;top:1069.2px;width:11.6px;height:11.6px;border-radius:50%;background:#93bb2f"></div>
<div class="t" style="left:643.2px;top:1065px;font-size:11.3px;color:#33363c">United Arab Emirates</div>
<div class="t" style="left:789.7px;top:1065px;font-size:11.7px;color:#33363c">59</div>
<!-- table scrollbar -->
<svg class="ic" style="left:2116.5px;top:1023px" width="11" height="9"><path d="M1,7.8 L5.25,1.4 L9.5,7.8 Z" fill="#8b8b8b"/></svg>
<div class="a" style="left:2116.8px;top:1037.9px;width:9.5px;height:80px;background:#8b8b8b;border-radius:4.75px"></div>

</div>
</body></html>
